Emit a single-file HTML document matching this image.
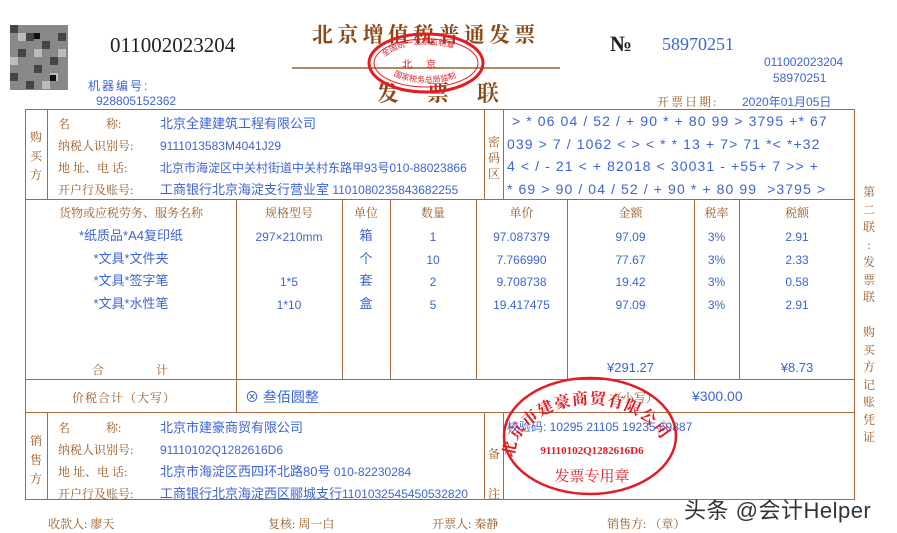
<!DOCTYPE html>
<html><head><meta charset="utf-8"><style>
body{margin:0;width:897px;height:533px;background:#fff;position:relative;overflow:hidden;font-family:"Liberation Sans","Noto Sans CJK SC",sans-serif}
.a{position:absolute;white-space:nowrap}
.br{color:#9a5a24;font-family:"Liberation Serif","Noto Serif CJK SC",serif}
.bl{color:#3d63d8}
.s12{font-size:12px}
.l{position:absolute;background:#a8683a}
.c{text-align:center}
</style></head><body>
<svg class="a" style="left:10px;top:25px" width="58" height="65">
<rect width="58" height="65" fill="#888"/>
<g fill="#444"><rect x="0" y="0" width="8" height="8"/><rect x="16" y="8" width="8" height="8"/><rect x="32" y="16" width="8" height="8"/><rect x="8" y="24" width="8" height="8"/><rect x="40" y="32" width="8" height="8"/><rect x="24" y="40" width="8" height="8"/><rect x="0" y="48" width="8" height="8"/><rect x="48" y="8" width="8" height="8"/><rect x="16" y="56" width="8" height="8"/></g>
<g fill="#bbb"><rect x="8" y="8" width="8" height="8"/><rect x="24" y="24" width="8" height="8"/><rect x="40" y="48" width="8" height="8"/><rect x="0" y="32" width="8" height="8"/><rect x="32" y="56" width="8" height="8"/><rect x="48" y="24" width="8" height="8"/></g>
<rect x="40" y="50" width="6" height="6" fill="#111"/><rect x="24" y="8" width="6" height="6" fill="#111"/>
</svg>
<div class="a" style="left:110px;top:33px;font:21px 'Liberation Serif',serif;color:#222">011002023204</div>
<div class="a" style="left:312px;top:19px;font-size:21px;letter-spacing:4.3px;font-weight:bold;color:#8b4a1a;font-family:'Noto Serif CJK SC',serif">北京增值税普通发票</div>
<div class="a" style="left:292px;top:67px;width:268px;height:2px;background:#b08a66"></div>
<div class="a" style="left:377px;top:77px;font-size:22px;letter-spacing:28px;font-weight:bold;color:#8b4a1a;font-family:'Noto Serif CJK SC',serif">发票联</div>
<svg class="a" style="left:360px;top:28px" width="135" height="72">
<ellipse cx="66" cy="35" rx="57" ry="29" fill="none" stroke="#e31b23" stroke-width="3"/>
<ellipse cx="66" cy="35" rx="52" ry="24" fill="none" stroke="#e31b23" stroke-width="1"/>
<path id="ta" d="M22 32 A46 22 0 0 1 110 32" fill="none"/>
<text font-size="8" fill="#e31b23" font-family="Noto Sans CJK SC"><textPath href="#ta" startOffset="4">全国统一发票监制章</textPath></text>
<text x="66" y="40" font-size="10" fill="#e31b23" text-anchor="middle" font-family="Noto Sans CJK SC" letter-spacing="14">北京</text>
<path id="tb" d="M28 42 A40 16 0 0 0 106 42" fill="none"/>
<text font-size="8" fill="#e31b23" font-family="Noto Sans CJK SC"><textPath href="#tb" startOffset="8">国家税务总局监制</textPath></text>
</svg>
<div class="a" style="left:610px;top:31px;font:bold 22px 'Liberation Serif',serif;color:#222">№</div>
<div class="a bl" style="left:662px;top:34px;font:18px 'Liberation Serif',serif">58970251</div>
<div class="a bl s12" style="left:764px;top:55px">011002023204</div>
<div class="a bl s12" style="left:773px;top:71px">58970251</div>
<div class="a bl s12" style="left:88px;top:77px;letter-spacing:2px">机器编号:</div>
<div class="a bl s12" style="left:96px;top:94px">928805152362</div>
<div class="a br s12" style="left:657px;top:93px;letter-spacing:2px">开票日期:</div>
<div class="a bl s12" style="left:742px;top:93px">2020年01月05日</div>

<div class="a" style="left:25px;top:109px;width:828px;height:389px;border:1px solid #a8683a"></div>
<div class="l" style="left:25px;top:199px;width:830px;height:1px"></div>
<div class="l" style="left:25px;top:379px;width:830px;height:1px"></div>
<div class="l" style="left:25px;top:412px;width:830px;height:1px"></div>
<div class="l" style="left:47px;top:109px;width:1px;height:90px"></div>
<div class="l" style="left:484px;top:109px;width:1px;height:90px"></div>
<div class="l" style="left:503px;top:109px;width:1px;height:90px"></div>
<div class="l" style="left:47px;top:412px;width:1px;height:87px"></div>
<div class="l" style="left:484px;top:412px;width:1px;height:87px"></div>
<div class="l" style="left:503px;top:412px;width:1px;height:87px"></div>
<div class="l" style="left:236px;top:199px;width:1px;height:213px"></div>
<div class="l" style="left:342px;top:199px;width:1px;height:180px"></div>
<div class="l" style="left:390px;top:199px;width:1px;height:180px"></div>
<div class="l" style="left:476px;top:199px;width:1px;height:180px"></div>
<div class="l" style="left:567px;top:199px;width:1px;height:180px"></div>
<div class="l" style="left:694px;top:199px;width:1px;height:180px"></div>
<div class="l" style="left:739px;top:199px;width:1px;height:180px"></div>

<div class="a br s12" style="left:30px;top:128px;line-height:19px;width:14px">购<br>买<br>方</div>
<div class="a br s12" style="left:58px;top:113px;line-height:22px">名&nbsp;&nbsp;&nbsp;&nbsp;&nbsp;&nbsp;&nbsp;&nbsp;&nbsp;&nbsp;&nbsp;&nbsp;称:<br>纳税人识别号:<br>地&nbsp;址、电&nbsp;话:<br>开户行及账号:</div>
<div class="a bl" style="left:160px;top:113px;line-height:22px;font-size:12px"><span style="font-size:13px">北京全建建筑工程有限公司</span><br>9111013583M4041J29<br>北京市海淀区中关村街道中关村东路甲93号010-88023866<br><span style="font-size:13px">工商银行北京海淀支行营业室</span> 1101080235843682255</div>
<div class="a br s12" style="left:488px;top:134px;line-height:16px;width:14px">密<br>码<br>区</div>
<div class="a bl" style="left:507px;top:110px;line-height:22.5px;font-size:14px;letter-spacing:1.1px">&nbsp;&gt; * 06 04 / 52 / + 90 * + 80 99 &gt; 3795 +* 67<br>039 &gt; 7 / 1062 &lt; &gt; &lt; * * 13 + 7&gt; 71 *&lt; *+32<br>4 &lt; / - 21 &lt; + 82018 &lt; 30031 - +55+ 7 &gt;&gt; +<br>* 69 &gt; 90 / 04 / 52 / + 90 * + 80 99 &nbsp;&gt;3795 &gt;</div>

<div class="a br s12 c" style="left:26px;width:210px;top:204px">货物或应税劳务、服务名称</div>
<div class="a br s12 c" style="left:236px;width:106px;top:204px">规格型号</div>
<div class="a br s12 c" style="left:342px;width:48px;top:204px">单位</div>
<div class="a br s12 c" style="left:390px;width:86px;top:204px">数量</div>
<div class="a br s12 c" style="left:476px;width:91px;top:204px">单价</div>
<div class="a br s12 c" style="left:567px;width:127px;top:204px">金额</div>
<div class="a br s12 c" style="left:694px;width:45px;top:204px">税率</div>
<div class="a br s12 c" style="left:739px;width:116px;top:204px">税额</div>
<div class="a bl c" style="left:26px;width:210px;top:225px;line-height:22.5px;font-size:13px">*纸质品*A4复印纸<br>*文具*文件夹<br>*文具*签字笔<br>*文具*水性笔</div>
<div class="a bl c s12" style="left:236px;width:106px;top:226px;line-height:22.5px">297×210mm<br>&nbsp;<br>1*5<br>1*10</div>
<div class="a bl c" style="left:342px;width:48px;top:225px;line-height:22.5px;font-size:13px">箱<br>个<br>套<br>盒</div>
<div class="a bl c s12" style="left:390px;width:86px;top:226px;line-height:22.5px">1<br>10<br>2<br>5</div>
<div class="a bl c s12" style="left:476px;width:91px;top:226px;line-height:22.5px">97.087379<br>7.766990<br>9.708738<br>19.417475</div>
<div class="a bl c s12" style="left:567px;width:127px;top:226px;line-height:22.5px">97.09<br>77.67<br>19.42<br>97.09</div>
<div class="a bl c s12" style="left:694px;width:45px;top:226px;line-height:22.5px">3%<br>3%<br>3%<br>3%</div>
<div class="a bl c s12" style="left:739px;width:116px;top:226px;line-height:22.5px">2.91<br>2.33<br>0.58<br>2.91</div>
<div class="a br s12" style="left:92px;top:361px;letter-spacing:52px">合计</div>
<div class="a bl c" style="left:567px;width:127px;top:360px;font-size:13px">¥291.27</div>
<div class="a bl c" style="left:739px;width:116px;top:360px;font-size:13px">¥8.73</div>

<div class="a br s12" style="left:72px;top:389px;letter-spacing:1px">价税合计（大写）</div>
<div class="a bl" style="left:245px;top:387px;font-size:14px">⊗ 叁佰圆整</div>
<div class="a br s12" style="left:610px;top:389px">（小写）</div>
<div class="a bl" style="left:692px;top:388px;font-size:14px">¥300.00</div>

<div class="a br s12" style="left:30px;top:432px;line-height:19px;width:14px">销<br>售<br>方</div>
<div class="a br s12" style="left:58px;top:417px;line-height:22px">名&nbsp;&nbsp;&nbsp;&nbsp;&nbsp;&nbsp;&nbsp;&nbsp;&nbsp;&nbsp;&nbsp;&nbsp;称:<br>纳税人识别号:<br>地&nbsp;址、电&nbsp;话:<br>开户行及账号:</div>
<div class="a bl" style="left:160px;top:417px;line-height:22px;font-size:12px"><span style="font-size:13px">北京市建豪商贸有限公司</span><br>91110102Q1282616D6<br><span style="font-size:13px">北京市海淀区西四环北路80号</span> 010-82230284<br><span style="font-size:13px">工商银行北京海淀西区郦城支行</span>1101032545450532820</div>
<div class="a br s12" style="left:488px;top:434px;line-height:40px;width:14px">备<br>注</div>
<div class="a bl s12" style="left:507px;top:418px">校验码: 10295 21105 19235 69887</div>
<svg class="a" style="left:500px;top:374px" width="184" height="126">
<ellipse cx="90" cy="62" rx="86" ry="58" fill="none" stroke="#e31b23" stroke-width="2.5"/>
<path id="arc" d="M14 84 A76 54 0 0 1 166 84" fill="none"/>
<text font-size="16" fill="#e31b23" font-weight="bold" font-family="Noto Serif CJK SC" letter-spacing="1"><textPath href="#arc" startOffset="0">北京市建豪商贸有限公司</textPath></text>
<text x="92" y="80" font-size="11" fill="#e31b23" text-anchor="middle" font-weight="bold" font-family="Liberation Serif">91110102Q1282616D6</text>
<text x="92" y="107" font-size="15" fill="#e31b23" text-anchor="middle" font-family="Noto Serif CJK SC">发票专用章</text>
</svg>

<div class="a br s12" style="left:862px;top:184px;width:14px;line-height:17.5px;text-align:center">第<br>二<br>联<br>:<br>发<br>票<br>联<br>&nbsp;<br>购<br>买<br>方<br>记<br>账<br>凭<br>证</div>

<div class="a br s12" style="left:48px;top:515px">收款人: 廖天</div>
<div class="a br s12" style="left:268px;top:515px">复核: 周一白</div>
<div class="a br s12" style="left:432px;top:515px">开票人: 秦静</div>
<div class="a br s12" style="left:607px;top:515px">销售方: （章）</div>
<div class="a" style="left:684px;top:493px;font-size:22px;color:#333;letter-spacing:0.5px">头条 @会计Helper</div>
</body></html>
